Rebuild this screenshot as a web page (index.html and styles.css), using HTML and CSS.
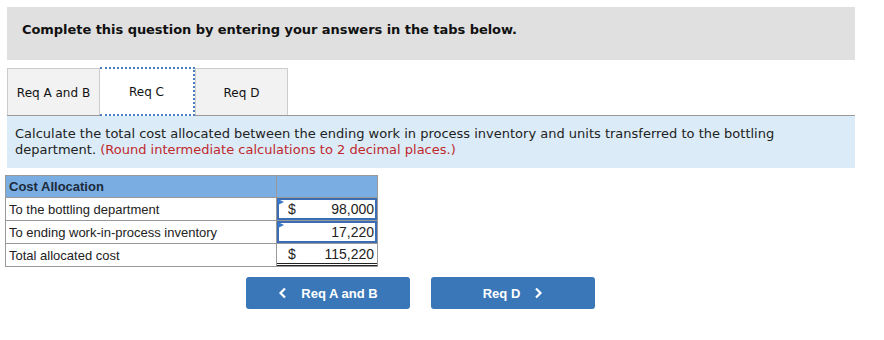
FILE: index.html
```html
<!DOCTYPE html>
<html>
<head>
<meta charset="utf-8">
<link rel="stylesheet" href="styles.css">
</head>
<body>
<div class="page">
  <div class="banner">Complete this question by entering your answers in the tabs below.</div>
  <div class="tabs">
    <div class="tab">Req A and B</div>
    <div class="tab active">Req C</div>
    <div class="tab">Req D</div>
  </div>
  <div class="prompt"><span>Calculate the total cost allocated between the ending work in process inventory and units transferred to the bottling</span> <span>department.</span> <span class="note">(Round intermediate calculations to 2 decimal places.)</span></div>
  <table class="alloc">
    <tr class="head"><td class="label">Cost Allocation</td><td class="val"></td></tr>
    <tr><td class="label">To the bottling department</td><td class="val"><div class="input"><span class="cur">$</span><span class="num">98,000</span></div></td></tr>
    <tr><td class="label">To ending work-in-process inventory</td><td class="val"><div class="input"><span class="cur"></span><span class="num">17,220</span></div></td></tr>
    <tr class="total"><td class="label">Total allocated cost</td><td class="val"><div class="sum"><span class="cur">$</span><span class="num">115,220</span></div></td></tr>
  </table>
  <div class="nav">
    <button class="btn prev"><svg width="10" height="12" viewBox="0 0 10 12"><path d="M7 1.5 L2.5 6 L7 10.5" fill="none" stroke="#fff" stroke-width="2.2"/></svg><span>Req A and B</span></button>
    <button class="btn next"><span>Req D</span><svg width="10" height="12" viewBox="0 0 10 12"><path d="M3 1.5 L7.5 6 L3 10.5" fill="none" stroke="#fff" stroke-width="2.2"/></svg></button>
  </div>
</div>
</body>
</html>
```
FILE: styles.css
```css
html, body { margin: 0; padding: 0; background: #fff; }
.page { padding: 7px 29px 0 7px; }
.banner {
  background: #e0e0e0;
  height: 53px;
  box-sizing: border-box;
  padding: 15px 0 0 15px;
  font-family: "DejaVu Sans", Verdana, sans-serif;
  font-weight: bold;
  font-size: 13px;
  color: #111;
  letter-spacing: -0.05px;
}
.tabs {
  display: flex;
  margin-top: 8px;
  height: 47px;
  border-bottom: 1px solid #999;
}
.tab {
  width: 93px;
  box-sizing: border-box;
  background: #f2f2f2;
  border: 1px solid #ccc;
  border-bottom: none;
  display: flex;
  align-items: center;
  justify-content: center;
  font-family: "DejaVu Sans", Verdana, sans-serif;
  font-size: 12px;
  color: #111;
  padding-top: 1px;
}
.tab.active {
  width: 95px;
  background: #fff;
  border: 2px dotted #4a7fc1;
  margin: -1px 0 -1px 0;
  position: relative;
}
.tab + .tab { border-left: none; }
.tab.active + .tab { border-left: 1px solid #ccc; }
.prompt {
  background: #dbecf8;
  padding: 10px 8px 10px 8px;
  font-family: "DejaVu Sans", Verdana, sans-serif;
  font-size: 13px;
  line-height: 16px;
  color: #222;
}
.note { color: #c0282d; }
.alloc {
  border-collapse: collapse;
  margin: 7px 0 0 -2px;
  font-family: "Liberation Sans", Arial, sans-serif;
  font-size: 13px;
  color: #222;
}
.alloc td { border: 1px solid #999; height: 22px; padding: 0; box-sizing: border-box; }
.alloc .label { width: 271px; padding-left: 3px; }
.alloc .val { width: 101px; font-size: 14px; }
.alloc .head td { background: #7aaee3; font-weight: bold; font-size: 13px; color: #1c2a3a; }
.input {
  position: relative;
  box-sizing: border-box;
  border: 2px solid #3a6db3;
  height: 22px;
  display: flex;
  align-items: center;
  justify-content: space-between;
  padding: 0 1px 0 9px;
}
.input::before {
  content: "";
  position: absolute;
  left: -1px; top: -1px;
  border-left: 6px solid #3a78c8;
  border-top: 3px solid transparent;
  border-bottom: 3px solid transparent;
}
.sum {
  box-sizing: border-box;
  display: flex;
  justify-content: space-between;
  padding: 0 3px 0 11px;
  border-bottom: 3px double #222;
  height: 22px;
  align-items: center;
}
.cur { width: 10px; }
.nav {
  display: flex;
  gap: 21px;
  margin: 10px 0 0 239px;
}
.btn {
  width: 164px;
  height: 32px;
  background: #3a77b9;
  border: none;
  border-radius: 3px;
  color: #fff;
  font-family: "Liberation Sans", Arial, sans-serif;
  font-weight: bold;
  font-size: 13px;
  display: flex;
  align-items: center;
  justify-content: center;
  gap: 13px;
  padding: 0;
}
```
